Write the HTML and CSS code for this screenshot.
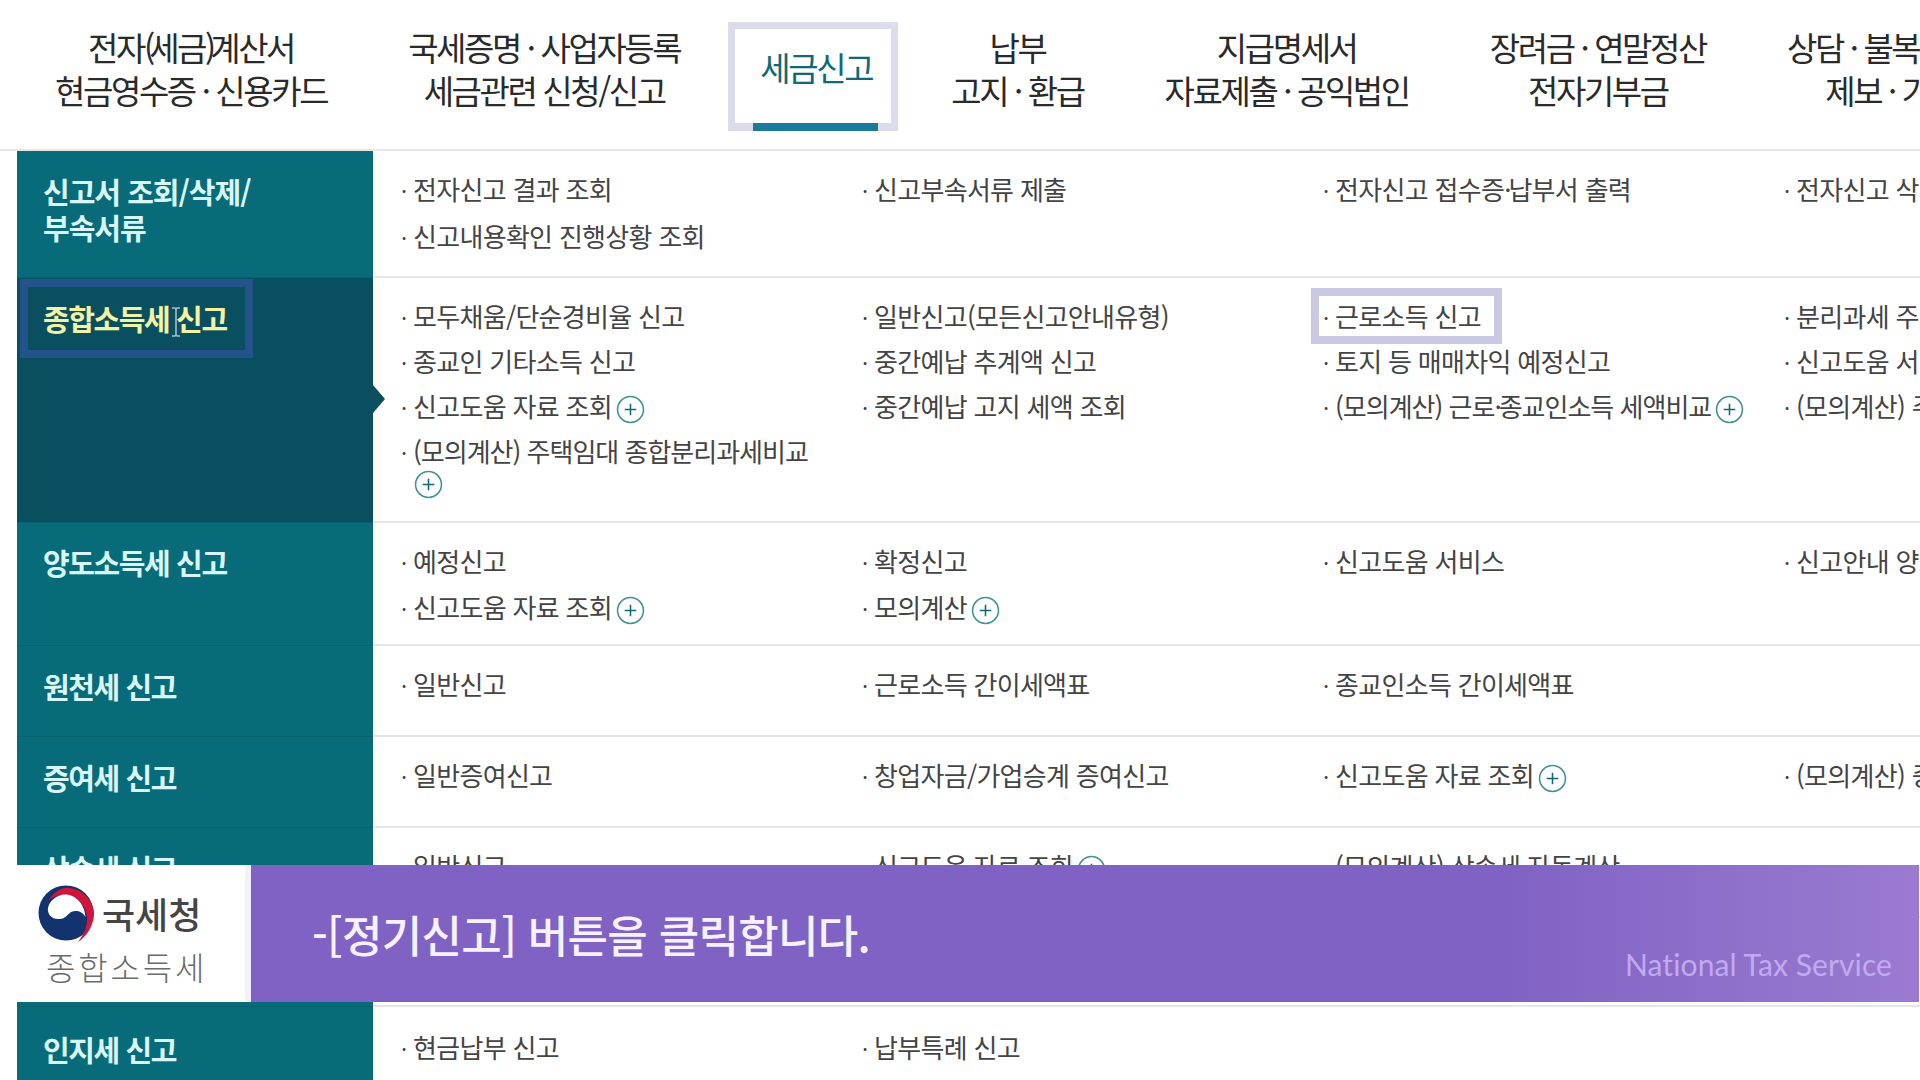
FILE: index.html
```html
<!DOCTYPE html>
<html lang="ko">
<head>
<meta charset="utf-8">
<title>세금신고</title>
<link rel="stylesheet" href="styles.css">
</head>
<body>
<svg class="defs" width="0" height="0"><symbol id="plus" viewBox="0 0 30 30"><circle cx="15" cy="15" r="13.4" fill="#fff" stroke="#3f9298" stroke-width="1.6"/><path d="M15 9v12M9 15h12" stroke="#0f6a78" stroke-width="1.6"/></symbol></svg>
<header class="nav">
  <div class="tab">전자<span class="tight">(</span>세금<span class="tight">)</span>계산서<br>현금영수증 · 신용카드</div>
  <div class="tab">국세증명 · 사업자등록<br>세금관련 신청/신고</div>
  <div class="tab tab-active"><div class="tab-box"><span class="tab-label">세금신고</span><i class="tab-bar"></i></div></div>
  <div class="tab">납부<br>고지 · 환급</div>
  <div class="tab">지급명세서<br>자료제출 · 공익법인</div>
  <div class="tab">장려금 · 연말정산<br>전자기부금</div>
  <div class="tab">상담 · 불복 · 고충<br>제보 · 기타</div>
</header>
<main class="menu">
  <section class="row r1">
    <h3 class="side">신고서 조회/삭제/<br>부속서류</h3>
    <ul class="items">
      <li>전자신고 결과 조회</li><li>신고부속서류 제출</li><li>전자신고 접수증<span class="dot">·</span>납부서 출력</li><li>전자신고 삭제 요청</li>
      <li>신고내용확인 진행상황 조회</li>
    </ul>
  </section>
  <section class="row r2 selected">
    <h3 class="side"><span class="side-focus">종합소득세 신고<svg class="ibeam" viewBox="0 0 12 30"><path d="M2 1h3l1 1 1-1h3M6 2v26M2 29h3l1-1 1 1h3" fill="none" stroke="#a9bccf" stroke-width="1.6"/></svg></span></h3>
    <ul class="items">
      <li>모두채움/단순경비율 신고</li><li>일반신고(모든신고안내유형)</li><li class="focused">근로소득 신고</li><li>분리과세 주택임대소득 신고</li>
      <li>종교인 기타소득 신고</li><li>중간예납 추계액 신고</li><li>토지 등 매매차익 예정신고</li><li>신고도움 서비스</li>
      <li>신고도움 자료 조회<svg class="plus"><use href="#plus"/></svg></li><li>중간예납 고지 세액 조회</li><li class="long">(모의계산) 근로<span class="dot">·</span>종교인소득 세액비교<svg class="plus"><use href="#plus"/></svg></li><li>(모의계산) 주택임대소득 세액비교</li>
      <li class="long">(모의계산) 주택임대 종합분리과세비교<br><svg class="plus plus-wrap"><use href="#plus"/></svg></li>
    </ul>
  </section>
  <section class="row r3">
    <h3 class="side">양도소득세 신고</h3>
    <ul class="items">
      <li>예정신고</li><li>확정신고</li><li>신고도움 서비스</li><li>신고안내 양도소득세</li>
      <li>신고도움 자료 조회<svg class="plus"><use href="#plus"/></svg></li><li>모의계산<svg class="plus"><use href="#plus"/></svg></li>
    </ul>
  </section>
  <section class="row r4">
    <h3 class="side">원천세 신고</h3>
    <ul class="items">
      <li>일반신고</li><li>근로소득 간이세액표</li><li>종교인소득 간이세액표</li>
    </ul>
  </section>
  <section class="row r4">
    <h3 class="side">증여세 신고</h3>
    <ul class="items">
      <li>일반증여신고</li><li>창업자금/가업승계 증여신고</li><li>신고도움 자료 조회<svg class="plus"><use href="#plus"/></svg></li><li>(모의계산) 증여세</li>
    </ul>
  </section>
  <section class="row r6">
    <h3 class="side">상속세 신고</h3>
    <ul class="items">
      <li>일반신고</li><li>신고도움 자료 조회<svg class="plus"><use href="#plus"/></svg></li><li>(모의계산) 상속세 자동계산</li>
    </ul>
  </section>
  <section class="row r7">
    <h3 class="side">증권거래세 신고</h3>
    <ul class="items">
      <li>일반신고</li>
    </ul>
  </section>
  <section class="row r8">
    <h3 class="side">인지세 신고</h3>
    <ul class="items">
      <li>현금납부 신고</li><li>납부특례 신고</li>
    </ul>
  </section>
</main>
<aside class="caption">
  <div class="brand">
    <div class="brand-top">
      <svg class="emblem" viewBox="0 0 58 58">
        <circle cx="28" cy="29" r="27.5" fill="#12336e"/>
        <path d="M10 17C16 8 24 3 31 4C45 5 57 18 56 31C55 43 48 53 40 58C46 50 50 42 49 33C48 21 38 11 27 11C20 11 14 13 10 17Z" fill="#d2143a"/>
        <path d="M47.500 33C44 27 38 26 33 28C30 30 27 35 22 35C14 36 9 30 10 24C11 17 19 10.500 27 10.500C38 10.500 47 21 47.500 33Z" fill="#fff"/>
      </svg>
      <span class="brand-name">국세청</span>
    </div>
    <div class="brand-sub">종합소득세</div>
  </div>
  <div class="banner">
    <p class="banner-text">-[정기신고] 버튼을 클릭합니다.</p>
    <span class="banner-mark">National Tax Service</span>
  </div>
</aside>
</body>
</html>
```
FILE: styles.css
```css
* { box-sizing: border-box; }
html, body { margin: 0; padding: 0; }
body {
  position: relative;
  width: 1920px;
  height: 1080px;
  overflow: hidden;
  background: #fff;
  font-family: "Noto Sans CJK KR", "Noto Sans", sans-serif;
  color: #444;
}
.defs { position: absolute; }

.nav {
  display: flex;
  gap: 1px;
  height: 151px;
  padding-left: 15px;
  border-bottom: 2px solid #e6e6e6;
  white-space: nowrap;
}
.tab {
  flex: none;
  padding: 26px 40px 0;
  font-size: 33px;
  line-height: 43px;
  letter-spacing: -2.4px;
  text-align: center;
  color: #2a2a2a;
}
.tight { letter-spacing: -6px; }
.tab-active { padding: 22px 0 0 7px; width: 189px; }
.tab-box {
  display: flex;
  flex-direction: column;
  width: 170px;
  height: 109px;
  border: 7px solid #dcdcec;
  border-bottom-width: 8px;
  text-align: left;
}
.tab-label { padding: 17px 0 0 25px; color: #0f6a78; }
.tab-bar {
  display: block;
  width: 125px;
  height: 8px;
  margin: auto 0 -8px 18px;
  background: #187a9c;
}

.row { display: flex; }
.side {
  flex: none;
  width: 356px;
  margin: 0 0 0 17px;
  padding: 22px 0 0 26px;
  background: #076b79;
  border-bottom: 1px solid #0a606d;
  color: #d9f6f6;
  font-size: 29px;
  font-weight: 700;
  line-height: 36px;
  letter-spacing: -1.4px;
}
.items {
  flex: none;
  display: grid;
  grid-template-columns: repeat(4, 461px);
  align-content: start;
  row-gap: 12px;
  width: 1547px;
  margin: 0;
  padding: 22px 0 0 26px;
  list-style: none;
  border-bottom: 2px solid #e6e6e6;
  font-size: 26px;
  line-height: 32px;
  letter-spacing: -.7px;
  color: #444;
}
.items li {
  position: relative;
  padding: 0 0 0 11px;
  white-space: nowrap;
}
.items li::before {
  content: "·";
  display: inline-block;
  width: 12px;
  margin-left: -12px;
  padding-left: 3px;
  font-size: 22px;
}
.items .long { letter-spacing: -1px; }
.dot { letter-spacing: -3px; }
.plus {
  width: 29px;
  height: 29px;
  margin: 5px 0 -5px 4px;
  vertical-align: top;
}
.plus-wrap { margin: 2px 0 -2px 4px; }
.focused::after {
  content: "";
  box-sizing: border-box;
  position: absolute;
  left: -10px;
  top: -12px;
  width: 191px;
  height: 56px;
  border: 8px solid #c9c9e3;
}

.r1 { height: 127px; }
.r1 .items { row-gap: 14px; }
.r1 .side { letter-spacing: -1px; }
.r2 { height: 245px; }
.r3 { height: 123px; }
.r3 .items { row-gap: 13px; }
.r3 .side { padding-top: 21px; }
.r4 { height: 91px; }
.r6 { height: 90px; }
.r7 { height: 89px; }
.r8 { height: 120px; }
.r8 .items { padding-top: 24px; }
.r8 .side { padding-top: 24px; }

.selected .side {
  position: relative;
  padding: 1px 0 0 3px;
  background: #0a4f60;
  color: #f3f3a3;
}
.selected .side::after {
  content: "";
  position: absolute;
  left: 356px;
  top: 107px;
  border-style: solid;
  border-width: 14px 0 14px 12px;
  border-color: transparent transparent transparent #0a4f60;
}
.side-focus {
  position: relative;
  display: block;
  width: 233px;
  height: 79px;
  padding: 13px 0 0 15px;
  border: 8px solid #24528a;
}
.ibeam {
  position: absolute;
  left: 142px;
  top: 20px;
  width: 12px;
  height: 30px;
}

.caption {
  position: absolute;
  left: 0;
  top: 865px;
  display: flex;
  width: 1920px;
  height: 137px;
}
.brand {
  flex: none;
  width: 251px;
  padding: 20px 0 0 38px;
  background: #fff;
  border-right: 6px solid #f2f2fb;
}
.brand-top { display: flex; align-items: center; height: 56px; }
.emblem { flex: none; width: 58px; height: 58px; }
.brand-name {
  margin-left: 6px;
  font-size: 36px;
  line-height: 56px;
  font-weight: 500;
  color: #454545;
}
.brand-sub {
  margin: 3px 0 0 8px;
  font-size: 32px;
  line-height: 44px;
  letter-spacing: 2.8px;
  color: #6a6a6a;
  font-weight: 300;
}
.banner {
  position: relative;
  flex: 1;
  margin-right: 1px;
  display: flex;
  align-items: center;
  padding: 0 0 0 61px;
  background: linear-gradient(90deg, #8062c4 0%, #8062c4 75%, #9a7bd0 100%);
}
.banner-text {
  margin: 0;
  font-size: 44px;
  line-height: 60px;
  font-weight: 500;
  letter-spacing: -.7px;
  color: #f6f1ff;
}
.banner-mark {
  position: absolute;
  right: 27px;
  bottom: 20px;
  font-family: "Lato", sans-serif;
  font-size: 30px;
  line-height: 36px;
  letter-spacing: .1px;
  color: #c0aaf0;
}
```
